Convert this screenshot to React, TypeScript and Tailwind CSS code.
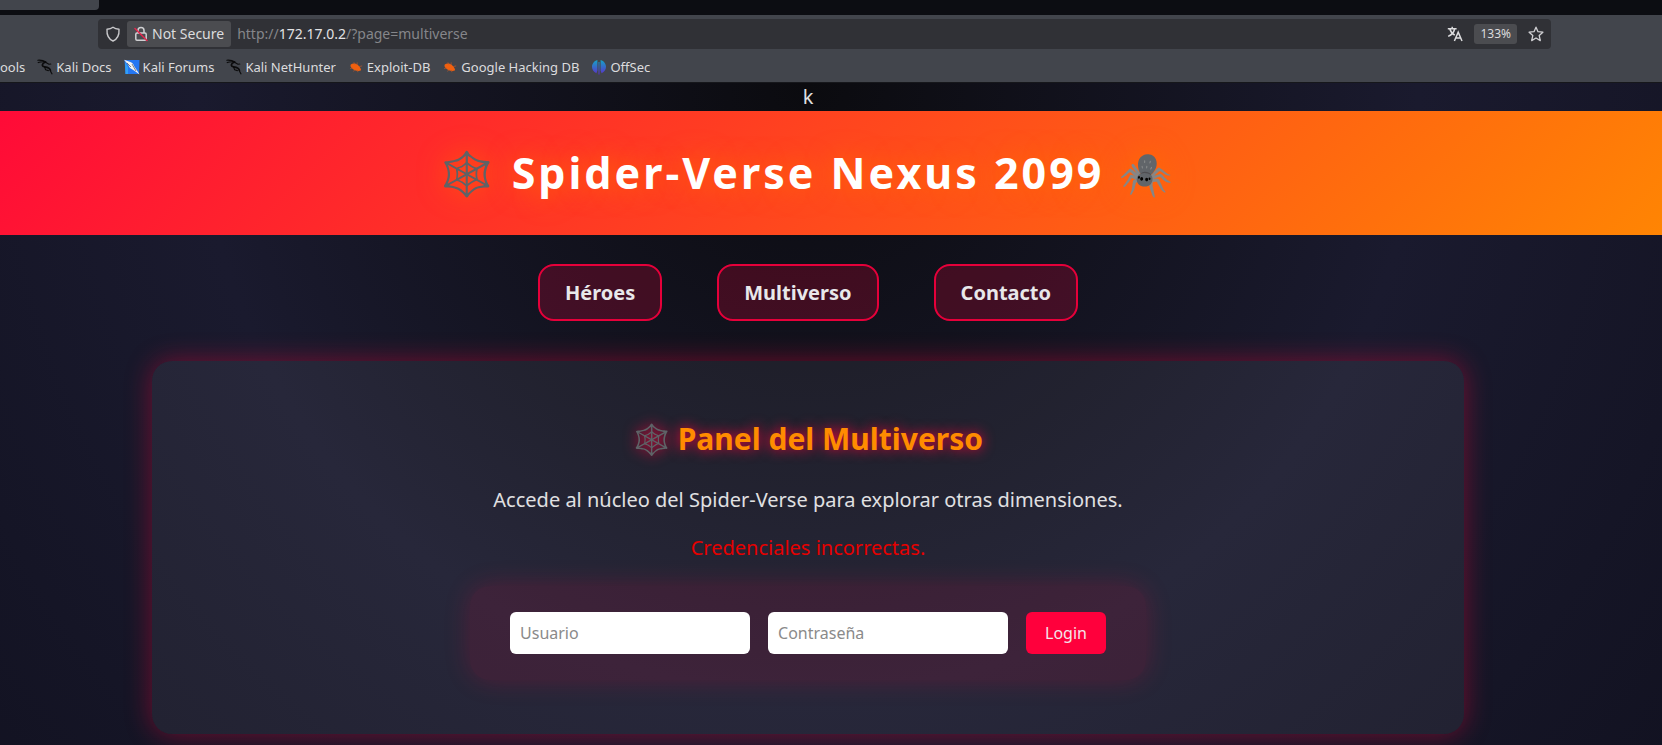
import React from "react";

function Shield() {
  return (
    <svg width="16" height="16" viewBox="0 0 16 16" fill="none" stroke="#c9c9cc" strokeWidth="1.4" strokeLinejoin="round" aria-hidden="true">
      <path d="M8 1.200 C9.600 2.500 11.600 3.100 14 3.200 C14.400 9 12.400 13 8 15 C3.600 13 1.600 9 2 3.200 C4.400 3.100 6.400 2.500 8 1.200 Z" />
    </svg>
  );
}

function InsecureLock() {
  return (
    <svg width="14" height="16" viewBox="0 0 14 16" fill="none" aria-hidden="true">
      <path d="M4 7 V4.500 A3 3 0 0 1 10 4.500 V7" stroke="#d0d0d2" strokeWidth="1.500" />
      <rect x="1.800" y="7" width="10.400" height="7.200" rx="1.200" stroke="#d0d0d2" strokeWidth="1.500" />
      <path d="M1 2.500 L13 14.500" stroke="#e2264d" strokeWidth="1.500" strokeLinecap="round" />
    </svg>
  );
}

function Translate() {
  return (
    <svg width="16" height="16" viewBox="0 0 16 16" fill="none" stroke="#dcdcde" strokeWidth="1.500" aria-hidden="true">
      <path d="M0.800 2.800 H9.600 M5.200 0.800 V2.800 M7.600 3 C7 6 4.500 8.800 1.200 10.400 M2.800 3 C3.600 5.600 5.600 8 7.800 9.200" />
      <path d="M7.400 15 L11.200 6.200 L15 15 M8.800 12 H13.600" />
    </svg>
  );
}

function Star() {
  return (
    <svg width="16" height="16" viewBox="0 0 16 16" fill="none" stroke="#d0d0d3" strokeWidth="1.300" strokeLinejoin="round" aria-hidden="true">
      <path d="M8 1.200 L10 5.700 L14.900 6.200 L11.200 9.500 L12.300 14.600 L8 12 L3.700 14.600 L4.800 9.500 L1.100 6.200 L6 5.700 Z" />
    </svg>
  );
}

function Dragon() {
  return (
    <svg width="16" height="16" viewBox="0 0 16 16" fill="none" stroke="#0b0b0c" strokeLinecap="round" strokeLinejoin="round" aria-hidden="true">
      <path d="M0.800 1.200 C3.500 1 6.500 1.400 9 3 M1.200 3.600 C3.600 2.600 6.500 2.600 9 3" strokeWidth="1.100" />
      <path d="M8.400 3.200 C4.600 4.400 4.400 7.400 7.600 7.800 C11 8.200 13 8.800 13.400 11.400" strokeWidth="1.700" />
      <path d="M13.200 11 C13.600 12.600 14.200 13.800 15 14.800 M8.500 3.200 L12 5.200 L13.800 5 M7.600 8 L8.600 10.800 L11.400 11.600" strokeWidth="1.100" />
    </svg>
  );
}

function ForumsIcon() {
  return (
    <svg width="16" height="16" viewBox="0 0 16 16" aria-hidden="true">
      <path d="M0.500 1 H15.500 L15 15 H1.500 Z" fill="#2577f2" />
      <path d="M1 3 L4 8 L4 15 H1.500 Z" fill="#31a0f6" />
      <path d="M0 0.800 L5 2.600 C8 3.200 9.500 5 10 7 L12 10 L15.600 15.600 L10 11.500 L6 9 L4 5.500 Z" fill="#f2f2f2" />
      <path d="M3 4 L7 8 M8 5 L12 12" stroke="#2b3340" strokeWidth="0.600" />
    </svg>
  );
}

function ExploitIcon() {
  return (
    <svg width="16" height="16" viewBox="0 0 16 16" aria-hidden="true">
      <path d="M2.800 5.600 C4.600 3.800 8.200 4.200 10.400 6.400 C12.400 8.200 13.600 10.600 12.800 11.600 C10 12.400 5.800 11.600 3.600 9 C2.400 7.800 2.200 6.600 2.800 5.600 Z" fill="#f0600f" />
      <path d="M6.500 5 L6 3.600 M9 5.500 L9.200 3.800 M11.500 7.500 L13.800 7 M4 9 L2.400 9.600 M6.500 11 L5.800 12.200 M9.500 11.500 L9.800 12.800" stroke="#b9562a" strokeWidth="0.700" strokeLinecap="round" />
    </svg>
  );
}

function OffSecIcon() {
  return (
    <svg width="16" height="16" viewBox="0 0 16 16" aria-hidden="true">
      <defs>
        <linearGradient id="offsec" x1="0" y1="0" x2="0" y2="1">
          <stop offset="0" stopColor="#14a3c7" />
          <stop offset="1" stopColor="#5b2fc9" />
        </linearGradient>
      </defs>
      <path d="M6.400 1 V11.500 L5.400 14.200 C2.600 13 1 10.600 1 7.800 S3 2 6.400 1 Z M9.600 1 V11.500 L10.600 14.200 C13.400 13 15 10.600 15 7.800 S13 2 9.600 1 Z M7.500 3 H8.500 V15.400 H7.500 Z" fill="url(#offsec)" />
    </svg>
  );
}

const bookmarks = [
  { label: "Kali Docs", icon: <Dragon /> },
  { label: "Kali Forums", icon: <ForumsIcon /> },
  { label: "Kali NetHunter", icon: <Dragon /> },
  { label: "Exploit-DB", icon: <ExploitIcon /> },
  { label: "Google Hacking DB", icon: <ExploitIcon /> },
  { label: "OffSec", icon: <OffSecIcon /> },
];

function BrowserChrome() {
  return (
    <div className="bg-[#42454c] text-sm text-[#dcdcde]">
      <div className="h-[15px] bg-[#0c0d12]">
        <div className="h-[10px] w-[99px] rounded-br-sm bg-[#42454c]" />
      </div>
      <div className="pt-1 pr-[111px] pl-[98px]">
        <div className="flex h-[30px] items-center rounded bg-[#303136] px-[7px]">
          <Shield />
          <button type="button" className="ml-[6px] flex h-[26px] items-center gap-1 rounded-[3px] bg-[#4b4c50] px-[7px]">
            <InsecureLock />
            Not Secure
          </button>
          <p className="ml-[6px] flex-1 text-[#85868a]">
            http://<span className="text-[#e2e2e4]">172.17.0.2</span>/?page=multiverse
          </p>
          <button type="button" aria-label="Translate page"><Translate /></button>
          <button type="button" className="mx-[11px] h-5 rounded-[3px] bg-[#4b4c50] px-[6px] text-xs">133%</button>
          <button type="button" aria-label="Bookmark this page"><Star /></button>
        </div>
      </div>
      <nav aria-label="Bookmarks" className="flex h-[34px] items-center gap-3 border-b border-[#16171b] pt-[3px] text-[13px]">
        <a href="#tools">ools</a>
        {bookmarks.map((b) => (
          <a key={b.label} href="#bookmark" className="flex items-center gap-[3px] whitespace-nowrap">
            {b.icon}
            {b.label}
          </a>
        ))}
      </nav>
    </div>
  );
}

function NavLink({ children }: { children: React.ReactNode }) {
  return (
    <a
      href="#section"
      className="rounded-2xl border-2 border-[#e6003a] bg-[#ff003c]/20 px-[25px] py-[13px] text-xl leading-[27px] font-bold text-[#e8e8ea]"
    >
      {children}
    </a>
  );
}

export default function App() {
  return (
    <div className="flex min-h-screen flex-col overflow-hidden bg-[#0f0f1a] font-['Noto_Sans',sans-serif]">
      <BrowserChrome />
      <div className="-mr-[106px] -ml-[152px] flex-1 bg-[radial-gradient(circle_1220px_at_top,#0b0b0f,#1a1a2e_50%,#10101e)] text-center text-xl text-[#e0e0e2]">
        <p className="h-7 leading-7">k</p>
        <header className="bg-[linear-gradient(135deg,#ff003c,#ff8c00)] py-8">
          <h1 className="text-[43px] leading-[60px] font-bold tracking-[3px] text-white [text-shadow:0_0_27px_#ff6a00]">
            🕸️ Spider-Verse Nexus 2099 🕷️
          </h1>
        </header>
        <nav aria-label="Principal" className="mt-[29px] flex justify-center gap-[55px]">
          <NavLink>Héroes</NavLink>
          <NavLink>Multiverso</NavLink>
          <NavLink>Contacto</NavLink>
        </nav>
        <main className="mx-auto mt-10 mb-3 w-10/12 max-w-[1312px] rounded-[20px] bg-white/6 px-10 pt-14 pb-[54px] shadow-[0_0_27px_rgba(255,0,60,0.4)]">
          <h2 className="text-[30px] leading-[44px] font-bold text-[#ff8c00] [text-shadow:0_0_13px_#ff003c]">
            🕸️ Panel del Multiverso
          </h2>
          <p className="mt-[25px] leading-[27px]">Accede al núcleo del Spider-Verse para explorar otras dimensiones.</p>
          <p className="mt-[21px] leading-[27px] text-[#e60000]">Credenciales incorrectas.</p>
          <form className="mx-auto mt-[25px] flex w-fit gap-[18px] rounded-[20px] bg-[#ff003c]/10 px-10 py-[26px] shadow-[0_0_27px_rgba(255,0,60,0.2)]">
            <input aria-label="Usuario" placeholder="Usuario" className="h-[42px] w-60 rounded-md bg-white px-[10px] text-base text-black placeholder:text-[#8a8a8a]" />
            <input aria-label="Contraseña" type="password" placeholder="Contraseña" className="h-[42px] w-60 rounded-md bg-white px-[10px] text-base text-black placeholder:text-[#8a8a8a]" />
            <button type="button" className="h-[42px] rounded-md bg-[#ff003c] px-[19px] text-base text-[#f4e6ea]">Login</button>
          </form>
        </main>
      </div>
    </div>
  );
}
